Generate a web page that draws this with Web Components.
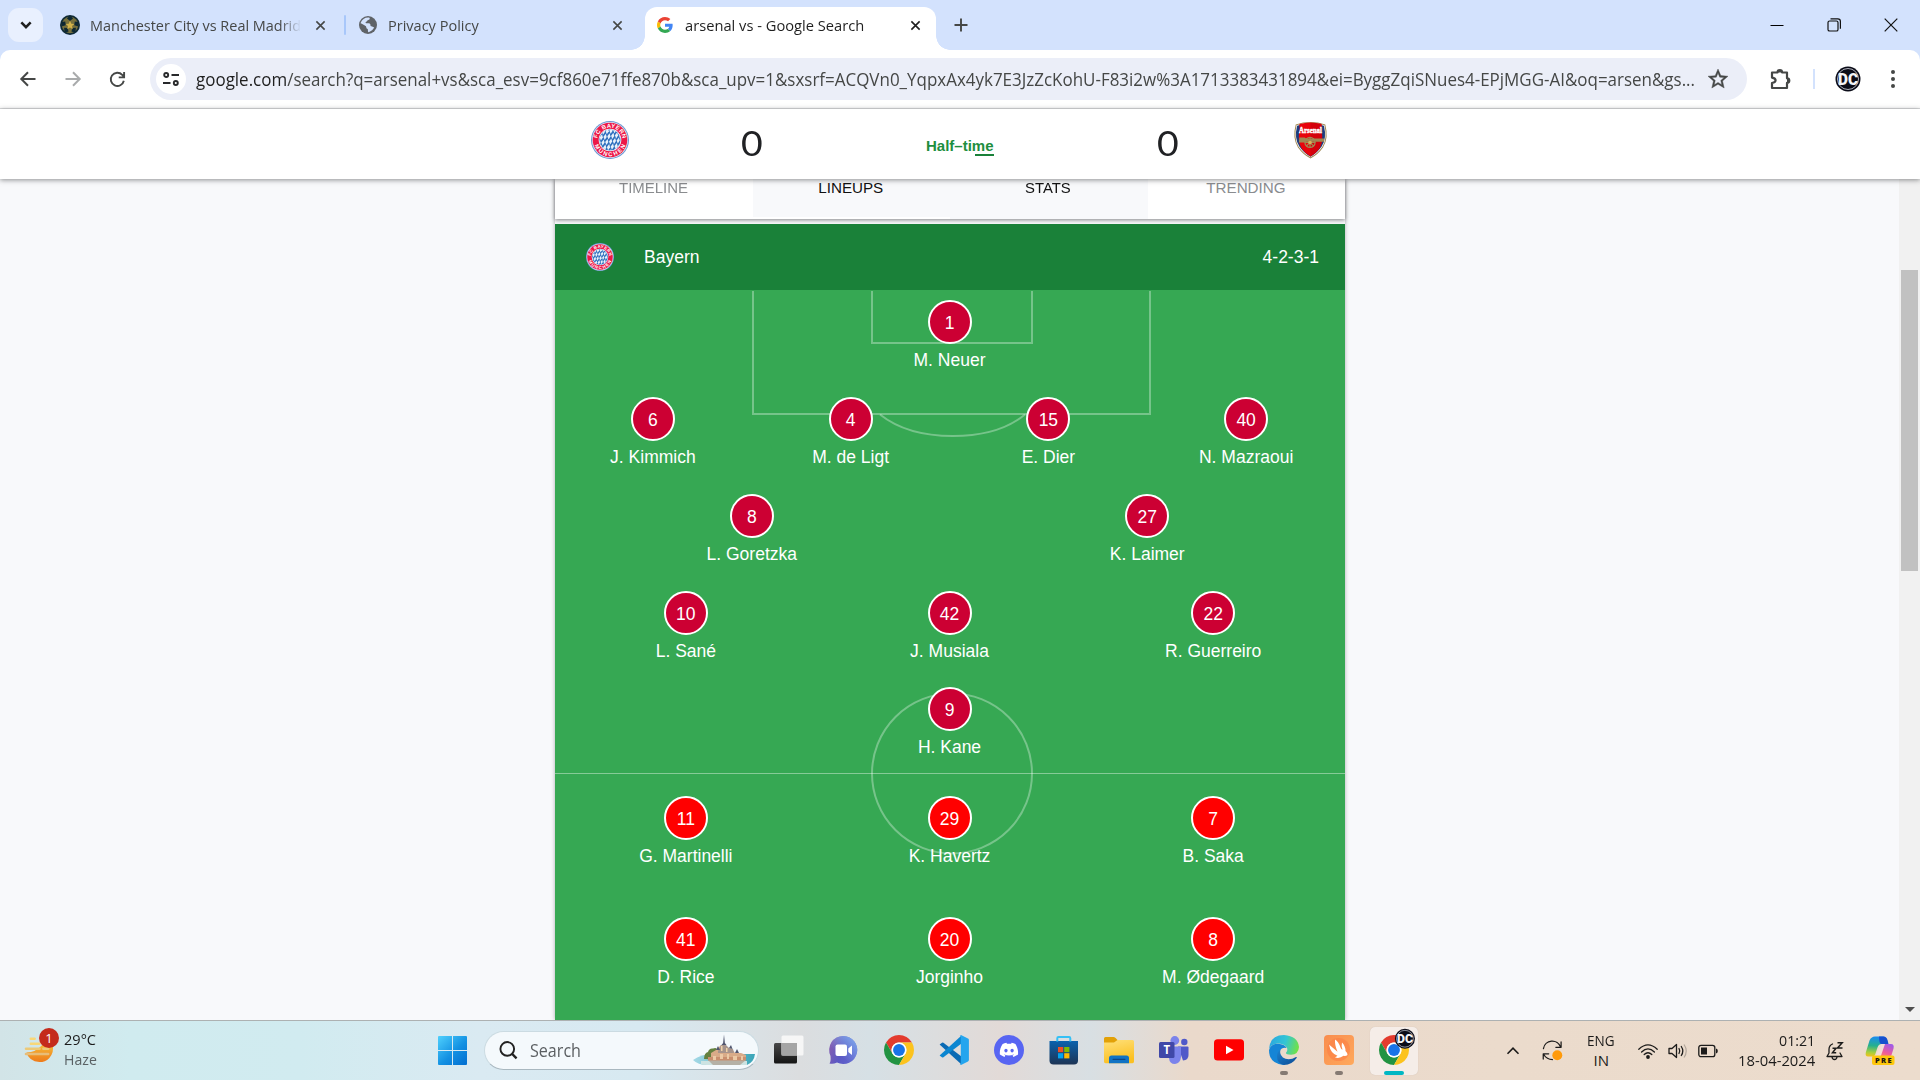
<!DOCTYPE html>
<html lang="en">
<head>
<meta charset="utf-8">
<title>arsenal vs - Google Search</title>
<style>
html,body{margin:0;width:1920px;height:1080px;overflow:hidden}
body{font-family:"Open Sans","Noto Sans",sans-serif;background:#f8f9fb}
</style>
</head>
<body>
<desktop-screen></desktop-screen>
<script>
const DC = (cx, cy, r) => `<circle cx="${cx}" cy="${cy}" r="${r}" fill="#0b0c18"/><circle cx="${cx}" cy="${cy}" r="${r * .84}" fill="none" stroke="#c9ccd6" stroke-width="${r * .07}"/><text x="${cx}" y="${cy + r * .46}" text-anchor="middle" font-family="Roboto,sans-serif" font-weight="900" font-size="${r * 1.25}" textLength="${r * 1.6}" lengthAdjust="spacingAndGlyphs" fill="#f4f4f8">DC</text>`;
const CHROME = `<path fill="#e33b2e" d="M3.22 12A24 24 0 0 1 44.78 12H24A12 12 0 0 0 13.61 30z"/><path fill="#229342" d="M13.61 30 3.22 12A24 24 0 0 0 24 48L34.39 30A12 12 0 0 1 13.61 30z"/><path fill="#fcc31e" d="M34.39 30 24 48A24 24 0 0 0 44.78 12H24A12 12 0 0 1 34.39 30z"/><circle cx="24" cy="24" r="12" fill="#fff"/><circle cx="24" cy="24" r="9.5" fill="#1a73e8"/>`;
const S = 'fill="none" stroke="#1c1b1a" stroke-width="1.3" stroke-linecap="round" stroke-linejoin="round"';
const ICONS = {
  chevron: ['0 0 12 12', '<path d="M2 3.8 6 7.8l4-4" fill="none" stroke="#1f1f1f" stroke-width="2.2"/>'],
  close: ['0 0 12 12', '<path d="M1.5 1.5l9 9M10.5 1.5l-9 9" stroke="currentColor" stroke-width="1.7"/>'],
  plus: ['0 0 14 14', '<path d="M7 .5v13M.5 7h13" stroke="#454746" stroke-width="1.9"/>'],
  min: ['0 0 14 14', '<path d="M.5 7.5h13" stroke="#000" stroke-width="1"/>'],
  restore: ['0 0 14 14', '<rect x="1" y="3" width="10" height="10" rx="1.6" fill="none" stroke="#111" stroke-width="1.2"/><path d="M3.5 .8h7.3q2.6 0 2.6 2.6v7.3" fill="none" stroke="#111" stroke-width="1.2"/>'],
  winclose: ['0 0 14 14', '<path d="M.7.7l12.6 12.6M13.3.7.7 13.3" stroke="#111" stroke-width="1.2"/>'],
  ball: ['0 0 20 20', '<circle cx="10" cy="10" r="10" fill="#102a36"/><circle cx="10" cy="10" r="8.2" fill="#77703c"/><path fill="#0d2733" d="M10 .8l3.2 2.4L10 6 6.8 3.2zM18.8 7l-1 4.2-3.6-1 .6-3.8zM1.2 7l1 4.2 3.6-1-.6-3.8zM15.5 17.2l-4-.4.7-3.8 3.7-.3zM4.5 17.2l4-.4-.7-3.8-3.7-.3z"/><path fill="#d2b24a" d="M10 5.8l1.3 2.9 3.1.3-2.4 2 .8 3.2L10 12.5 7.2 14.200l.8-3.2-2.4-2 3.1-.3z"/>'],
  globe: ['0 0 24 24', '<circle cx="12" cy="12" r="12" fill="#5f6368"/><path fill="#d3e2fd" d="M14 2.2c1 1.8-.2 2.8-1.8 3.2-1.2.4-1 1.9-2.5 2.2-1.3.3-1.1 2-.1 2.2 2 .2 4.8-.3 5.5 1.3.4 1.3-.2 2.3 1.2 2.500 2 .2 2.200 1.500 4 1.200-1 3.200-4 6-7.500 6.700-1.200-.4-.8-2.200-.9-3.300-.2-1.400-1.800-1-2.100-2.600-.2-1.500-.6-2-2-2.800L3.100 10c-.9 0-1-.8-.7-1.500C4.200 4.300 8.500 1.300 14 2.200z"/><path fill="#5f6368" d="M16.500 4.500l3.500 4.500 1 4-3-.5-2-3z"/>'],
  google: ['0 0 48 48', '<path fill="#EA4335" d="M24 9.500c3.540 0 6.710 1.220 9.210 3.600l6.850-6.850C35.900 2.380 30.470 0 24 0 14.620 0 6.510 5.380 2.560 13.220l7.980 6.190C12.430 13.720 17.740 9.500 24 9.500z"/><path fill="#4285F4" d="M46.980 24.550c0-1.570-.15-3.090-.38-4.550H24v9.020h12.940c-.58 2.960-2.260 5.480-4.780 7.180l7.730 6c4.510-4.180 7.090-10.360 7.090-17.650z"/><path fill="#FBBC05" d="M10.530 28.590c-.48-1.450-.76-2.990-.76-4.590s.27-3.140.76-4.590l-7.980-6.190C.92 16.460 0 20.120 0 24c0 3.880.92 7.540 2.560 10.780l7.970-6.190z"/><path fill="#34A853" d="M24 48c6.480 0 11.930-2.130 15.890-5.810l-7.730-6c-2.150 1.450-4.920 2.300-8.160 2.300-6.260 0-11.570-4.220-13.470-9.910l-7.980 6.190C6.510 42.620 14.620 48 24 48z"/>'],
  back: ['0 0 16 16', '<path d="M15.500 8H1.500M8 1.300 1.300 8 8 14.700" fill="none" stroke="currentColor" stroke-width="2"/>'],
  reload: ['0 0 18 18', '<path d="M15.700 10.300A7 7 0 1 1 14 4.100l1.700 1.800M16 1v5.700h-5.700" fill="none" stroke="#454746" stroke-width="2"/>'],
  tune: ['0 0 16 16', '<g fill="none" stroke="#28292b" stroke-width="1.900"><circle cx="3.200" cy="4" r="2"/><path d="M8.500 4H16M0 12h7.500"/><circle cx="12.800" cy="12" r="2"/></g>'],
  star: ['0 0 24 24', '<path fill="#454746" stroke="#454746" stroke-width=".4" d="M22 9.240l-7.190-.62L12 2 9.190 8.630 2 9.240l5.460 4.730L5.820 21 12 17.270 18.180 21l-1.630-7.030L22 9.240zM12 15.400l-3.760 2.270 1-4.280-3.320-2.880 4.380-.38L12 6.100l1.710 4.040 4.380.38-3.320 2.880 1 4.280L12 15.400z"/>'],
  puzzle: ['0 0 22 22', '<path d="M2 4.500h5.500a2.300 2.300 0 0 1 4.600 0H17v5.800a2.300 2.300 0 0 1 0 4.600V20H2v-5q3.600-.6 3.600-2.700T2 9.600z" fill="none" stroke="#454746" stroke-width="2.200" stroke-linejoin="round"/><path fill="#454746" d="M7.500 4.500a2.300 2.800 0 0 1 4.600 0zM17 10.300a2.800 2.300 0 0 1 0 4.600z"/>'],
  dc: ['0 0 26 26', DC(13, 13, 12.5)],
  dots: ['0 0 6 20', '<g fill="#454746"><circle cx="3" cy="3" r="2"/><circle cx="3" cy="10" r="2"/><circle cx="3" cy="17" r="2"/></g>'],
  bayern: ['0 0 38 38', `<defs><clipPath id="c"><circle cx="19" cy="19" r="10.600"/></clipPath><path id="a" d="M6.600 21.500A12.600 12.600 0 1 1 31.400 21.500"/><path id="b" d="M2.700 19A16.300 16.300 0 0 0 35.300 19"/></defs><circle cx="19" cy="19" r="19" fill="#6c97d3"/><circle cx="19" cy="19" r="18" fill="#dde7f4"/><circle cx="19" cy="19" r="17.300" fill="#ec1848"/><circle cx="19" cy="19" r="11.300" fill="#fff"/><g clip-path="url(#c)"><rect x="8" y="8" width="22" height="22" fill="#2f70be"/><g fill="#e9f2fb">${(() => { let s = ''; for (let r = -1; r < 5; r++) for (let c = -2; c < 8; c++) { const x = 7 + c * 3.8 + r * 1.7, y = 11 - c * .5 + r * 5.2; s += `<path d="M${x} ${y}l2.300-3 .9 3.200-2 3z"/>`; } return s; })()}</g></g><g fill="#fff" font-family="Liberation Sans,sans-serif" font-weight="700" font-size="5.800"><text><textPath href="#a" startOffset="50%" text-anchor="middle" textLength="36">FC BAYERN</textPath></text><text><textPath href="#b" startOffset="50%" text-anchor="middle" textLength="40">MÜNCHEN</textPath></text></g>`],
  arsenal: ['0 0 34 38', '<path fill="#a08752" d="M1.800 3Q17-2 32.200 3 36 17 30 26.500 25 34 17 38 9 34 4 26.500-2 17 1.800 3z"/><path fill="#fff" d="M2.600 3.700Q17-1 31.400 3.700 34.700 17 29.200 26 24.500 33 17 36.800 9.500 33 4.800 26-.7 17 2.600 3.700z"/><path fill="#1d3d7c" d="M3.200 4.300Q17-.5 30.800 4.300 34 17 28.600 25.500 24 32.500 17 36.200 10 32.500 5.400 25.500 0 17 3.200 4.300z"/><path fill="#e8040c" d="M5.500 2.600Q17-.8 28.500 2.600 27.600 9 29 14 29.500 22 26 28 22 33.500 17 36 12 33.500 8 28 4.500 22 5 14 6.400 9 5.500 2.600z"/><path fill="#c3000b" opacity=".55" d="M17 1.200q6 0 11.500 1.400Q27.600 9 29 14q.5 8-3 14-4 5.500-9 8z"/><g fill="#a08752"><path d="M5.500 16.500h5.500l1.500 1H31v3.300H12.500l-2 .8H5z"/></g><g fill="none" stroke="#a08752" stroke-width="1.300"><circle cx="16.500" cy="21.500" r="5.200"/><path d="M16.500 16v11M11 21.500h11M12.700 17.700l7.600 7.600M20.300 17.700l-7.600 7.600"/></g><circle cx="16.500" cy="21.500" r="1.800" fill="#d8b45a"/><text x="17" y="11.500" text-anchor="middle" font-family="Liberation Serif,serif" font-weight="700" font-size="7.600" textLength="23.500" lengthAdjust="spacingAndGlyphs" fill="#fff" stroke="#fff" stroke-width=".4">Arsenal</text>'],
  haze: ['0 0 30 30', '<defs><linearGradient id="h" x1="0" y1="0" x2="0" y2="1"><stop offset="0" stop-color="#f6c23c"/><stop offset="1" stop-color="#ee7a1a"/></linearGradient></defs><path d="M1.500 17Q11 17 18 9l6-2 4.500 1Q30.500 17 25 23q-4 4-10 4Q4 26 1.500 17z" fill="url(#h)"/><g stroke-width="2.600" stroke-linecap="round"><path d="M6 2.800h4M6 8h9" stroke="#f8d778"/><path d="M1 13.200h14M19 13.200h5" stroke="#ecc978"/><path d="M1 18.500h23" stroke="#e8bd78"/></g>'],
  win: ['0 0 29 29', '<defs><linearGradient id="w" gradientUnits="userSpaceOnUse" x1="0" y1="0" x2="26" y2="28"><stop offset="0" stop-color="#4fd0fd"/><stop offset=".6" stop-color="#1290e2"/><stop offset="1" stop-color="#0473d3"/></linearGradient></defs><path fill="url(#w)" d="M1 0h13v14H0V1q0-1 1-1zM15 0h13q1 0 1 1v13H15zM0 15h14v14H1q-1 0-1-1zM15 15h14v13q0 1-1 1H15z"/>'],
  mag: ['0 0 20 20', '<circle cx="8.700" cy="8.300" r="7.200" fill="none" stroke="#222" stroke-width="2"/><path d="M13.800 13.600 18.500 18.300" stroke="#222" stroke-width="2.400"/>'],
  castle: ['0 0 62 30', '<defs><linearGradient id="s" x1="0" x2="1" y1="0" y2="0"><stop offset="0" stop-color="#a5d9e6"/><stop offset="1" stop-color="#3aa5b8"/></linearGradient><clipPath id="k"><path d="M0 24Q8 18 20 18H62Q61 26 54 29H14Q5 29 0 24z"/></clipPath></defs><g clip-path="url(#k)"><rect y="17" width="62" height="13" fill="url(#s)"/><path d="M8 25h46v5H8z" fill="#cde3e2"/><path d="M15 24h38l-6 5H20z" fill="#b5b1a6"/></g><path d="M11 23q0-6 4-7 1-4 5-3.500 4-2 5 3v8z" fill="#64803f"/><path d="M18 22v-5l5-3 3-3 2-2h4l3 3 4 1 3 4h6l5 2v5z" fill="#d9ab88"/><path d="M25 15l3-6h5l3 3 4 1 1 4H25z" fill="#a7948c"/><path d="M28.500 9l1.600-2L31-1.500 31.900 7l1.600 2zM23 14l2-4 2 4zM36 12l2-3 1.500 4zM42 17l2-4 2 4z" fill="#51566e"/><path d="M28 10h1.500v5H28zM33 12h1.500v4H33z" fill="#efd2a8"/><path d="M15 21h38v3.500H15z" fill="#c98f6e"/><g fill="#eccaa6"><path d="M20 20h3v4h-3zM27 18h3v5h-3zM34 18h2v5h-2zM40 20h4v4h-4zM48 20h2v4h-2z"/></g>'],
  task: ['0 0 30 30', '<defs><linearGradient id="t" x1="0" x2="0" y1="0" y2="1"><stop offset="0" stop-color="#484848"/><stop offset="1" stop-color="#151515"/></linearGradient></defs><rect y="8" width="23" height="20.500" rx="1.500" fill="url(#t)"/><rect x="7.500" y=".5" width="22" height="20" rx="1.500" fill="#f6f6f6"/><path d="M7.500 8H23v12.500H7.500z" fill="#a5a5a5"/>'],
  chat: ['0 0 30 30', '<defs><linearGradient id="p" x1="0" x2="1" y1=".2" y2=".6"><stop offset="0" stop-color="#8b5fae"/><stop offset=".5" stop-color="#5b58c4"/><stop offset="1" stop-color="#6266cf"/></linearGradient><linearGradient id="q" x1="1" y1="0" x2=".4" y2=".7"><stop offset="0" stop-color="#83b1f0"/><stop offset="1" stop-color="#83b1f0" stop-opacity="0"/></linearGradient></defs><path d="M14.500 1A14 14 0 1 1 8 27.500Q4 29.500.5 28.500 2 26.500 1.500 21A14 14 0 0 1 14.500 1z" fill="url(#p)"/><path d="M14.500 1A14 14 0 1 1 8 27.500Q4 29.500.5 28.500 2 26.500 1.500 21A14 14 0 0 1 14.500 1z" fill="url(#q)"/><rect x="6.500" y="9.500" width="11.500" height="11.500" rx="2" fill="#fff"/><path d="M19.300 13.500l3.700-3v9.500l-3.700-3z" fill="#fff"/>'],
  chrome: ['0 0 48 48', CHROME],
  chromedc: ['0 0 48 48', CHROME + DC(41.500, 6, 16)],
  vscode: ['0 0 30 30', '<path fill="#0a6ab4" d="M.6 9.600 3 7.800q.7-.5 1.400 0L22.500 21.500V29.500z"/><path fill="#0b86d1" d="M.6 20.400 3 22.200q.7.5 1.400 0L22.500 8.500V.5z"/><path fill="#24a5ee" d="M22.500.3 29 3.500q.9.400.9 1.400v20.200q0 1-.9 1.400l-6.500 3.200q-1.200.4-2-.6 1.300.4 1.300-1V2q0-1.500-1.300-1.200 1-1 2-.5z"/>'],
  discord: ['0 0 30 30', '<circle cx="15" cy="15" r="15" fill="#5865f2"/><path transform="translate(5.800 5.600) scale(.77)" fill="#fff" d="M20.317 4.370a19.791 19.791 0 0 0-4.885-1.515.074.074 0 0 0-.079.037c-.21.375-.444.864-.608 1.250a18.270 18.270 0 0 0-5.487 0 12.640 12.640 0 0 0-.617-1.250.077.077 0 0 0-.079-.037A19.736 19.736 0 0 0 3.677 4.370C.533 9.046-.32 13.580.099 18.058a.082.082 0 0 0 .031.057 19.900 19.900 0 0 0 5.993 3.030c.462-.63.874-1.295 1.226-1.994a13.107 13.107 0 0 1-1.872-.892l.372-.292c3.928 1.793 8.180 1.793 12.062 0l.373.292a12.299 12.299 0 0 1-1.873.892c.36.698.772 1.362 1.225 1.993a19.839 19.839 0 0 0 6.002-3.030c.5-5.177-.838-9.674-3.321-13.744zM8.020 15.330c-1.183 0-2.157-1.085-2.157-2.419s.956-2.419 2.157-2.419c1.210 0 2.176 1.096 2.157 2.420 0 1.333-.956 2.418-2.157 2.418zm7.975 0c-1.183 0-2.157-1.085-2.157-2.419s.955-2.419 2.157-2.419c1.210 0 2.176 1.096 2.157 2.420 0 1.333-.946 2.418-2.157 2.418z"/>'],
  store: ['0 0 30 30', '<defs><linearGradient id="m" x1="0" x2="0" y1="0" y2="1"><stop offset="0" stop-color="#0b62ad"/><stop offset="1" stop-color="#1d3455"/></linearGradient></defs><path d="M.5 6h28.500v19.500q0 4-4 4H4.500q-4 0-4-4z" fill="url(#m)"/><path d="M8.300 6.500V3.200q0-1.200 1.200-1.200h10.600q1.200 0 1.200 1.200V6.500" fill="none" stroke="#35c0f5" stroke-width="2"/><path fill="#f05023" d="M9 12h5.200v5.200H9z"/><path fill="#7fba00" d="M15.200 12h5.200v5.200h-5.200z"/><path fill="#02a4ef" d="M9 18.200h5.200v5.200H9z"/><path fill="#ffb902" d="M15.200 18.200h5.200v5.200h-5.200z"/>'],
  folder: ['0 0 30 30', '<defs><linearGradient id="f" x1="0" x2=".3" y1="0" y2="1"><stop offset="0" stop-color="#ffe07a"/><stop offset="1" stop-color="#fbc021"/></linearGradient></defs><path d="M0 8V3.500Q0 2 1.500 2h8q1 0 1.800.8L13.500 5H18v3z" fill="#e2a108"/><path d="M0 7.500h10L13.500 5h15q1.500 0 1.500 1.500v20q0 1.700-1.500 1.700h-27Q0 28.200 0 26.500z" fill="url(#f)"/><path d="M5 28.200v-5.200q0-2.500 2.500-2.500h15q2.500 0 2.500 2.500v5.200z" fill="#1173c4"/><rect x="8.500" y="23.700" width="13" height="1.400" rx=".7" fill="#0d4686"/>'],
  teams: ['0 0 30 30', '<circle cx="25.300" cy="7" r="3.200" fill="#5059c9"/><path d="M19 11.500h9.500q1 0 1 1V20q0 5-5.500 5.500z" fill="#5059c9"/><circle cx="15.800" cy="5.500" r="4.400" fill="#7b83eb"/><path d="M10 11.500h12v10.500q-.5 6-6 7-5.500 0-6-6z" fill="#7b83eb"/><rect y="7" width="15.500" height="16" rx="1.500" fill="#4048a8"/><text x="7.800" y="19" text-anchor="middle" font-family="Open Sans,sans-serif" font-weight="700" font-size="11.500" fill="#fff">T</text>'],
  youtube: ['0 0 30 30', '<rect y="4.300" width="30" height="21.200" rx="3.500" fill="#f00"/><path d="M12 10.700v8.600l7.500-4.300z" fill="#fff"/>'],
  edge: ['0 0 30 30', '<defs><linearGradient id="e1" x1="0" x2="1" y1=".2" y2=".4"><stop offset="0" stop-color="#2ba6e0"/><stop offset=".55" stop-color="#33c5d5"/><stop offset="1" stop-color="#6fe04c"/></linearGradient><linearGradient id="e2" x1="0" x2="1" y1="0" y2="1"><stop offset="0" stop-color="#1b82cf"/><stop offset="1" stop-color="#0c4a94"/></linearGradient></defs><path fill="url(#e1)" d="M0 14Q1 0 15 0 29 1 30 12q-.5 7.500-8 7.700-5.500 0-5-2 2.200-2.300.8-5.200Q15 8.500 8.500 8.500 2.500 9 0 14z"/><path fill="#1585d6" d="M0 15Q2 8.500 9 8.700q6.500.3 8.700 4.300-5-1-6.700 3-1.500 7 4.500 10.500 1 3.200-1 3.500Q0 28.500 0 15z"/><path fill="url(#e2)" d="M11.200 15q-.8 6.500 5.300 8.800 5.500 1.300 10.500-1.800 1-.2.800.8Q23 30 15 30 8 28.500 8 21.500q0-5 3.200-6.500z"/>'],
  bird: ['0 0 30 30', '<defs><linearGradient id="o" x1="0" x2="1" y1="0" y2="1"><stop offset="0" stop-color="#f98d4e"/><stop offset="1" stop-color="#ffa95c"/></linearGradient></defs><rect width="30" height="30" rx="4" fill="url(#o)"/><circle cx="14.500" cy="14.500" r="11.500" fill="#fb7f45" opacity=".6"/><path fill="#fff" d="M11 4.500q3.500 2 5.500 8 .6 1.800 2 2.300-1.500-4-.5-7.300 3.500 3.500 3.500 8.500 2.200 2 2 4-1.500 1.200-4 .8-3.500 3-8.500 1.700l2.500-1.800Q6.500 18.500 5 9.500q4 3.500 8.500 7.200Q10.500 10 11 4.500z"/>'],
  up: ['0 0 14 14', '<path d="M1.500 9.700 7 4.200l5.500 5.500" fill="none" stroke="#1c1b1a" stroke-width="1.600"/>'],
  sync: ['0 0 22 22', `<path d="M1.500 9A9.300 9.300 0 0 1 19.500 7.500M20 2v5.700h-5.500M1.300 20v-5.500H7M2 15.500Q5 20.500 11 20.500" ${S}/><circle cx="16" cy="16" r="5.200" fill="#ff9a0a"/>`],
  wifi: ['0 0 20 16', `<g ${S}><path d="M.8 6.200Q10-2.500 19.200 6.200M3.600 9Q10 2.800 16.400 9M6.200 11.500Q10 8 13.800 11.500"/></g><circle cx="10" cy="14" r="1.900" fill="#1c1b1a"/>`],
  sound: ['0 0 20 16', `<path d="M1 5.500h3L8.500 1.500v13L4 10.500H1z" ${S}/><path d="M11 5.500q1.500 2.500 0 5M13.300 3.500q3 4.500 0 9" ${S}/><path d="M16 1.500q4.500 6.500 0 13" fill="none" stroke="#b3a79c" stroke-width="1.200"/>`],
  battery: ['0 0 20 14', `<rect x=".8" y="1.300" width="16" height="11.400" rx="2.200" ${S}/><rect x="3" y="3.500" width="6" height="7" fill="#1c1b1a"/><path d="M18 4.500q1.800.2 1.800 2.500T18 9.500z" fill="#1c1b1a"/>`],
  bell: ['0 0 18 20', `<path d="M6.500 3Q3 4.500 3 8.500V12L1 15.500h15L14 12M6 16q.3 2.500 2.500 2.500T11 16" ${S}/><path d="M6.500 7.200h3.500L6.500 11.700h3.700M11.500 1.800h4.700L11.500 7h5" fill="none" stroke="#1c1b1a" stroke-width="1.500"/>`],
  copilot: ['0 0 30 30', '<defs><linearGradient id="l" x1=".3" x2=".2" y1="0" y2="1"><stop offset="0" stop-color="#1a8cf0"/><stop offset=".45" stop-color="#25b08e"/><stop offset=".8" stop-color="#a9cf3c"/><stop offset="1" stop-color="#f2c21c"/></linearGradient><linearGradient id="r" x1=".7" x2=".3" y1="0" y2="1"><stop offset="0" stop-color="#a05be8"/><stop offset=".6" stop-color="#ee5b9b"/><stop offset="1" stop-color="#ff8a5c"/></linearGradient></defs><path d="M7 1.500Q8 .5 10 .5h8q3 0 4 3.500l1 4h-6.500q-3 0-4 3.500L10 19q-1 1.500-3 1.500H3Q0 20.500.8 16.500L4.500 4.500Q5.500 2 7 1.500z" fill="url(#l)"/><path d="M14 .5h4.500q3 0 4 3.500l1 4H16q-2-1-2-7.500z" fill="#1750ce"/><path d="M18 8h8q3.500 0 2.500 4.500l-2.500 8q-.8 2-3 2h-9z" fill="url(#r)"/><path d="M16.500 8H20l-5 14.500H9.500z" fill="#f4dcd6"/><rect x="7" y="19.500" width="22.500" height="9.500" rx="2" fill="#fdc70c"/><text x="18.300" y="27" text-anchor="middle" font-family="Open Sans,sans-serif" font-weight="800" font-size="7.500" textLength="16.500" fill="#1d1a10">PRE</text>']
};
const define = (tag, cls) => customElements.define(tag, cls);
const el = (css, html) => class extends HTMLElement {
  constructor() { super(); this.attachShadow({ mode: 'open' }).innerHTML = `<style>*{box-sizing:border-box}${css}</style>${html}`; }
};

// <ui-icon name w h>: inline vector icon
define('ui-icon', class extends HTMLElement {
  connectedCallback() {
    if (this.shadowRoot) return;
    const [vb, body] = ICONS[this.getAttribute('name')];
    const w = this.getAttribute('w'), h = this.getAttribute('h') || w;
    this.attachShadow({ mode: 'open' }).innerHTML = `<style>:host{display:block;flex:none;width:${w}px;height:${h}px}svg{display:block;overflow:visible}</style><svg width="${w}" height="${h}" viewBox="${vb}">${body}</svg>`;
  }
});
// <fit-text w>: one line of text condensed or widened to a given width
define('fit-text', class extends HTMLElement {
  connectedCallback() {
    if (this.shadowRoot) return;
    const w = +this.getAttribute('w');
    this.attachShadow({ mode: 'open' }).innerHTML = `<style>:host{display:block;flex:none;width:${w}px;white-space:pre}span{display:inline-block;transform-origin:0 50%}</style><span><slot></slot></span>`;
    const s = this.shadowRoot.querySelector('span');
    s.style.transform = `scaleX(${w / s.offsetWidth})`;
  }
});

define('tab-strip', el(`
:host{display:flex;height:50px;background:#d3e2fd;align-items:center;font-size:15px;color:#454746}
.find{width:35px;height:34px;margin-left:8px;border-radius:11px;background:#e9f0fe;display:flex;align-items:center;justify-content:center}
.tab{display:flex;align-items:center;height:43px;margin-top:7px;padding-bottom:7px}
.t1{width:284px;margin-left:17px}.t1 fit-text{margin-left:10px;-webkit-mask:linear-gradient(90deg,#000 90%,transparent 100%)}
.t1 ui-icon[name=close]{margin-left:14px}
.sep{width:2px;height:20px;background:#a8c7fa;border-radius:1px}
.t2{width:299px;padding-left:13px}.t2 fit-text{margin-left:11px;margin-right:133px}
.t3{position:relative;width:291px;background:#fff;border-radius:12px 12px 0 0;padding-left:12px;color:#1f1f1f}
.t3 fit-text{margin-left:12px;margin-right:46px}
.t3:before,.t3:after{content:"";position:absolute;bottom:0;width:14px;height:14px}
.t3:before{left:-14px;background:radial-gradient(circle at 0 0,transparent 13.500px,#fff 14px)}
.t3:after{right:-14px;background:radial-gradient(circle at 100% 0,transparent 13.500px,#fff 14px)}
.new{margin-left:18px}.ctl{margin-left:auto;display:flex;gap:43px;margin-right:22px}
`, `<div class="find"><ui-icon name="chevron" w="14"></ui-icon></div>
<div class="tab t1"><ui-icon name="ball" w="20"></ui-icon><fit-text w="211">Manchester City vs Real Madrid</fit-text><ui-icon name="close" w="11"></ui-icon></div>
<div class="sep"></div>
<div class="tab t2"><ui-icon name="globe" w="18"></ui-icon><fit-text w="91">Privacy Policy</fit-text><ui-icon name="close" w="11"></ui-icon></div>
<div class="tab t3"><ui-icon name="google" w="16"></ui-icon><fit-text w="179">arsenal vs - Google Search</fit-text><ui-icon name="close" w="11"></ui-icon></div>
<ui-icon class="new" name="plus" w="14"></ui-icon>
<div class="ctl"><ui-icon name="min" w="14"></ui-icon><ui-icon name="restore" w="14"></ui-icon><ui-icon name="winclose" w="14"></ui-icon></div>`));

define('address-bar', el(`
:host{display:block;background:#d3e2fd}
.bar{display:flex;align-items:center;height:59px;background:#fff;border-bottom:1px solid #dcdddf;border-radius:10px 10px 0 0;padding-left:20px;color:#454746}
.fwd{margin-left:29px;transform:scaleX(-1);color:#a9abac}.re{margin-left:28px}
.box{display:flex;align-items:center;width:1597px;height:42px;margin-left:24px;border-radius:21px;background:#ebeef8;font-size:17.500px}
.tune{width:30px;height:30px;border-radius:50%;background:#fff;display:flex;align-items:center;justify-content:center;margin-left:6px}
.url{margin-left:10px}b{font-weight:400;color:#1f1f1f}
.st{margin-left:11px}.sep{width:2px;height:20px;background:#d3e2fd;margin-left:21px}
`, `<div class="bar"><ui-icon name="back" w="16"></ui-icon><ui-icon class="fwd" name="back" w="16"></ui-icon><ui-icon class="re" name="reload" w="17"></ui-icon>
<div class="box"><div class="tune"><ui-icon name="tune" w="16"></ui-icon></div><fit-text class="url" w="1499"><b>google.com</b>/search?q=arsenal+vs&amp;sca_esv=9cf860e71ffe870b&amp;sca_upv=1&amp;sxsrf=ACQVn0_YqpxAx4yk7E3JzZcKohU-F83i2w%3A1713383431894&amp;ei=ByggZqiSNues4-EPjMGG-AI&amp;oq=arsen&amp;gs...</fit-text><ui-icon class="st" name="star" w="24"></ui-icon></div>
<ui-icon name="puzzle" w="22" style="margin-left:23px"></ui-icon><div class="sep"></div><ui-icon name="dc" w="26" style="margin-left:20px"></ui-icon><ui-icon name="dots" w="6" h="20" style="margin-left:29px"></ui-icon></div>`));

define('score-header', el(`
:host{position:relative;z-index:2;display:block;height:70px;background:#fff;box-shadow:0 1px 5px rgba(32,33,36,.5);overflow:visible}
.in{display:flex;align-items:flex-start;width:736px;margin-left:591px;padding-top:12px;font-family:"Liberation Sans",Arial,sans-serif}
.sc{font-family:Lato,sans-serif;font-weight:400;font-size:34px;line-height:40px;color:#202124;width:22px;margin-top:2px}
.ht{font-weight:700;font-size:15px;line-height:18px;color:#1e8e3e;margin:16px 163px 0 163px;width:68px}
.ht i{display:block;width:19px;height:2px;margin:-1px 0 0 49px;background:#1a8139}
`, `<div class="in"><ui-icon name="bayern" w="38"></ui-icon><fit-text class="sc" w="22" style="margin-left:112px">0</fit-text><div class="ht"><fit-text w="68">Half–time</fit-text><i></i></div><fit-text class="sc" w="22">0</fit-text><ui-icon name="arsenal" w="33" h="38" style="margin-left:115px"></ui-icon></div>`));

define('view-tabs', el(`
:host{display:flex;height:40px;background:#fff;box-shadow:0 1px 4px rgba(32,33,36,.55);font:15.200px/18px "Liberation Sans",Arial,sans-serif;color:#8a8c8f}
div{flex:1;display:flex;justify-content:center;padding-right:1px}
.on{background:#f8f9fb;color:#111}.s{height:38px}
`, `<div><fit-text w="69">TIMELINE</fit-text></div><div class="on s"><fit-text w="65">LINEUPS</fit-text></div><div class="on"><fit-text w="46">STATS</fit-text></div><div><fit-text w="79">TRENDING</fit-text></div>`));

define('team-bar', el(`
:host{display:flex;align-items:center;height:66px;margin-top:5px;padding:0 26px 0 31px;background:#1a8139;color:#fff;font-size:17.500px}
.n{margin-left:30px}.f{margin-left:auto}
`, `<ui-icon name="bayern" w="28"></ui-icon><div class="n"><slot></slot></div><div class="f"><slot name="formation"></slot></div>`));

define('pitch-player', el(`
:host{flex:1;display:flex;flex-direction:column;align-items:center;line-height:20px}
.c{width:44px;height:44px;border-radius:50%;border:2px solid #fff;background:var(--kit);display:flex;align-items:center;justify-content:center;padding-top:1px}
.n{margin-top:6px}
`, `<div class="c"><slot name="no"></slot></div><div class="n"><slot></slot></div>`));

const ROWS = [
  [97, 'h', [[1, 'M. Neuer']]],
  [97, 'h', [[6, 'J. Kimmich'], [4, 'M. de Ligt'], [15, 'E. Dier'], [40, 'N. Mazraoui']]],
  [97, 'h', [[8, 'L. Goretzka'], [27, 'K. Laimer']]],
  [96, 'h', [[10, 'L. Sané'], [42, 'J. Musiala'], [22, 'R. Guerreiro']]],
  [109, 'h', [[9, 'H. Kane']]],
  [121, 'a', [[11, 'G. Martinelli'], [29, 'K. Havertz'], [7, 'B. Saka']]],
  [103, 'a', [[41, 'D. Rice'], [20, 'Jorginho'], [8, 'M. Ødegaard']]]
];
define('football-pitch', el(`
:host{display:block;position:relative;height:730px;padding-top:10px;background:#36a853;color:#fff;font-size:17.500px;overflow:hidden}
.lines{position:absolute;left:0;top:0}
.row{position:relative;display:flex;margin-left:-1px}
.h{--kit:#cc0033}.a{--kit:#ff0000}
`, `<svg class="lines" width="790" height="730" fill="none" stroke="#fff" stroke-opacity=".32" stroke-width="2"><path d="M198 1V124H595V1M317 1V53H477V1"/><path d="M325 124.500Q352 146 398 146T470 124.500"/><circle cx="397" cy="483.500" r="80"/><path d="M0 483.500H790" stroke-width="1" stroke-opacity=".4"/></svg>` +
ROWS.map(([h, k, ps]) => `<div class="row ${k}" style="height:${h}px">${ps.map(([n, p]) => `<pitch-player><span slot="no">${n}</span>${p}</pitch-player>`).join('')}</div>`).join('')));

define('page-scrollbar', el(`
:host{display:flex;flex-direction:column;align-items:center;width:21px;height:841px;background:#f1f1f1}
.th{width:17px;height:301px;margin-top:91px;background:#c1c1c1}
.dn{margin-top:auto;margin-bottom:8px;border:5px solid transparent;border-top-color:#505050;border-bottom:0}
`, `<div class="th"></div><div class="dn"></div>`));

define('results-page', el(`
:host{display:flex;justify-content:space-between;height:841px;background:#f8f9fb;font-family:"Liberation Sans",Arial,sans-serif}
.card{width:790px;margin-left:555px;box-shadow:0 0 4px rgba(32,33,36,.35)}
`, `<div class="card"><view-tabs></view-tabs><team-bar>Bayern<span slot="formation">4-2-3-1</span></team-bar><football-pitch></football-pitch></div><page-scrollbar></page-scrollbar>`));

define('weather-widget', el(`
:host{display:flex;margin-left:25px;width:413px;height:59px;font-size:15px;line-height:20px;color:#1b1b1b}
.i{position:relative;width:29px;margin-right:10px;padding-top:15px}
.b{position:absolute;left:14px;top:7px;width:20px;height:20px;border-radius:50%;background:#c42b1c;color:#fff;text-align:center;font-size:13px}
.t{padding-top:8px}.t fit-text+fit-text{color:#5a6164}
`, `<div class="i"><ui-icon name="haze" w="29"></ui-icon><div class="b">1</div></div><div class="t"><fit-text w="32">29°C</fit-text><fit-text w="33">Haze</fit-text></div>`));

define('search-pill', el(`
:host{display:flex;align-items:center;width:275px;height:39px;margin:0 15px 0 17px;padding-left:14px;border-radius:20px;background:#f4f9fc;border:1px solid #cbdbe2;border-bottom-color:#a9b8c0;font-size:18px;line-height:24px;color:#5b5f62}
fit-text{margin:-2px 0 0 12px}
`, `<ui-icon name="mag" w="19"></ui-icon><fit-text w="51">Search</fit-text><ui-icon name="castle" w="62" h="30" style="margin-left:112px"></ui-icon>`));

define('task-icon', class extends HTMLElement {
  connectedCallback() {
    const st = this.getAttribute('state') || '';
    this.attachShadow({ mode: 'open' }).innerHTML = `<style>*{box-sizing:border-box}
:host{display:flex;flex-direction:column;align-items:center;width:30px;height:48px;padding-top:8px}
:host([state=active]){width:48px;margin:0 -9px;border-radius:5px;background:#f5ede8;box-shadow:0 0 1px #c8b9ae}
i{display:block;margin-top:6px;width:8px;height:4px;border-radius:2px;background:#857a73}
:host([state=active]) i{width:20px;background:#00b7c3}</style><ui-icon name="${this.getAttribute('icon')}" w="30"></ui-icon>${st ? '<i></i>' : ''}`;
  }
});

define('system-tray', el(`
:host{display:flex;align-items:center;margin-left:97px;height:59px;font-size:15px;line-height:20px;color:#1c1b1a}
.d,.l{display:flex;flex-direction:column;margin-top:-2px}.d{align-items:flex-end}.l{align-items:center}
`, `<ui-icon name="up" w="14"></ui-icon><ui-icon name="sync" w="21" style="margin-left:22px"></ui-icon>
<div class="l" style="margin-left:24px"><fit-text w="28">ENG</fit-text><fit-text w="15">IN</fit-text></div>
<ui-icon name="wifi" w="20" h="16" style="margin-left:23px"></ui-icon><ui-icon name="sound" w="20" h="16" style="margin-left:10px"></ui-icon><ui-icon name="battery" w="20" h="14" style="margin-left:10px"></ui-icon>
<div class="d" style="margin-left:20px"><fit-text w="36">01:21</fit-text><fit-text w="77">18-04-2024</fit-text></div>
<ui-icon name="bell" w="18" h="20" style="margin-left:11px"></ui-icon><ui-icon name="copilot" w="30" style="margin-left:21px"></ui-icon>`));

define('task-bar', el(`
:host{display:flex;align-items:center;height:60px;border-top:1px solid #adb1b2;background:linear-gradient(90deg,#d2e4e7 0,#d0ebef 130px,#d1ebf0 300px,#daeaf2 480px,#d7e9f1 640px,#dbdddf 800px,#d6e0e5 870px,#e2dad7 1000px,#d8dfe3 1090px,#ead9cb 1190px,#ebdbcc 1500px,#ecdccd 1920px)}
.apps{display:flex;gap:25px}
`, `<weather-widget></weather-widget><ui-icon name="win" w="29"></ui-icon><search-pill></search-pill><div class="apps">` +
['task', 'chat', 'chrome', 'vscode', 'discord', 'store', 'folder', 'teams', 'youtube', 'edge:open', 'bird:open', 'chromedc:active'].map(n => { const [i, s] = n.split(':'); return `<task-icon icon="${i}"${s ? ` state="${s}"` : ''}></task-icon>`; }).join('') +
`</div><system-tray></system-tray>`));

define('desktop-screen', el(`:host{display:flex;flex-direction:column;width:1920px;height:1080px;overflow:hidden}`,
`<tab-strip></tab-strip><address-bar></address-bar><score-header></score-header><results-page></results-page><task-bar></task-bar>`));
</script>
</body>
</html>
